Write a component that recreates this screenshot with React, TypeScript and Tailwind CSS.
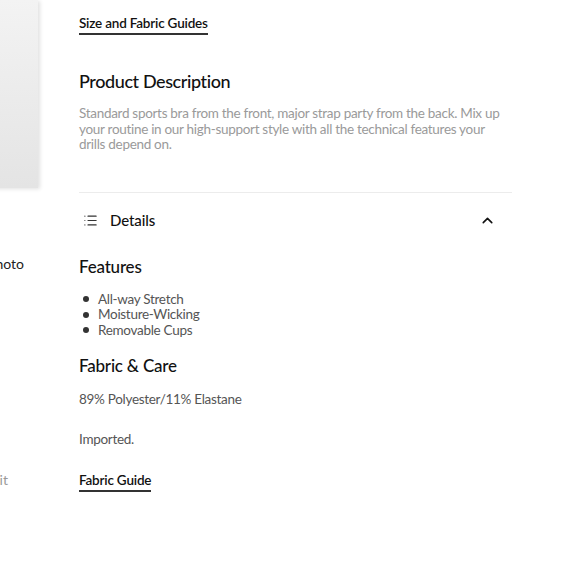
import { List, ChevronUp } from 'lucide-react';

const font = { fontFamily: 'Lato, "Noto Sans", sans-serif' };

function App() {
  return (
    <div className="w-[580px] h-[580px] overflow-hidden bg-white flex" style={font}>
      {/* left gallery column, scrolled partly out of view */}
      <div className="w-[300px] -ml-[262px] shrink-0 flex flex-col">
        <div className="h-[188px] bg-gradient-to-b from-[#f3f3f3] to-[#e4e4e4] shadow-[2px_1px_4px_rgba(0,0,0,0.12)]" />
        <div className="h-[66px]" />
        <div className="flex justify-end pr-[14px] text-[14px] leading-5 text-[#222]">
          <span className="whitespace-nowrap">Upload Photo</span>
        </div>
        <div className="h-[196px]" />
        <div className="flex justify-end pr-[30px] text-[14px] leading-5 text-[#999]">
          <span className="whitespace-nowrap">True to Fit</span>
        </div>
      </div>

      {/* product info column */}
      <div className="ml-[41px] w-[433px] shrink-0 flex flex-col">
        <div className="pt-[10px]">
          <a className="inline-block text-[13.5px] font-semibold tracking-[-0.2px] leading-[19px] text-[#111] border-b-2 border-[#333]">
            Size and Fabric Guides
          </a>
        </div>

        <h2 className="mt-[34px] text-[18px] font-medium tracking-[-0.4px] leading-6 text-[#111]">Product Description</h2>
        <p className="mt-[13px] w-[425px] text-[13.5px] tracking-[-0.3px] leading-[15.5px] text-[#9a9a9a]">
          Standard sports bra from the front, major strap party from the back. Mix up your routine in our high-support style with all the technical features your drills depend on.
        </p>

        <div className="mt-[39px] border-t border-[#ececec]" />

        <div className="h-[56px] flex items-center pl-[4px] pr-[16px]">
          <List size={15} strokeWidth={1.75} className="text-[#333]" />
          <span className="ml-[12px] text-[15px] font-medium tracking-[-0.1px] text-[#111]">Details</span>
          <ChevronUp size={17} strokeWidth={2.25} className="ml-auto text-[#111]" />
        </div>

        <h3 className="mt-[6px] text-[17px] font-medium tracking-[-0.2px] leading-6 text-[#111]">Features</h3>
        <ul className="mt-[13px] text-[13.5px] tracking-[-0.3px] leading-[15.5px] text-[#555]">
          {['All-way Stretch', 'Moisture-Wicking', 'Removable Cups'].map((f) => (
            <li key={f} className="flex items-center">
              <span className="w-[6px] h-[6px] rounded-full bg-[#333] ml-[4px] mr-[9px]" />
              {f}
            </li>
          ))}
        </ul>

        <h3 className="mt-[16px] text-[17px] font-medium tracking-[-0.2px] leading-6 text-[#111]">Fabric &amp; Care</h3>
        <p className="mt-[11px] text-[13.5px] tracking-[-0.3px] leading-5 text-[#555]">89% Polyester/11% Elastane</p>
        <p className="mt-[20px] text-[13.5px] tracking-[-0.3px] leading-5 text-[#555]">Imported.</p>
        <div className="mt-[18px]">
          <a className="inline-block text-[13.5px] font-semibold tracking-[-0.2px] leading-[19px] text-[#111] border-b-2 border-[#333]">
            Fabric Guide
          </a>
        </div>
      </div>
    </div>
  );
}

export default App;
